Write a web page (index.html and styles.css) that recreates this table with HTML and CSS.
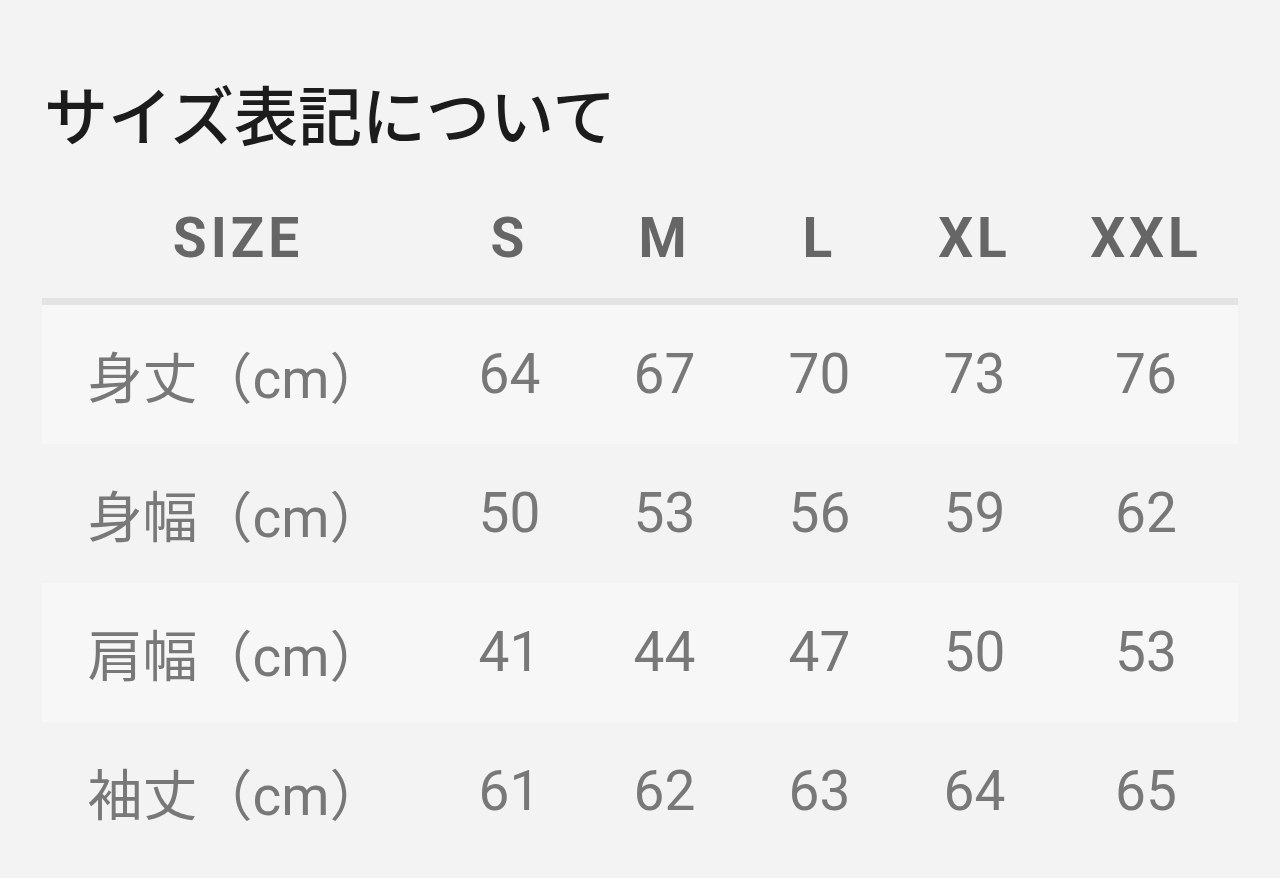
FILE: index.html
```html
<!DOCTYPE html>
<html lang="ja">
<head>
<meta charset="utf-8">
<link rel="stylesheet" href="styles.css">
</head>
<body>
<main class="page">
  <h1 class="title">サイズ表記について</h1>
  <table class="size-table">
    <colgroup>
      <col class="col-label">
      <col class="col-s"><col class="col-m"><col class="col-l"><col class="col-xl"><col class="col-xxl">
    </colgroup>
    <thead>
      <tr><th>SIZE</th><th>S</th><th>M</th><th>L</th><th>XL</th><th>XXL</th></tr>
    </thead>
    <tbody>
      <tr class="alt"><td>身丈（cm）</td><td>64</td><td>67</td><td>70</td><td>73</td><td>76</td></tr>
      <tr><td>身幅（cm）</td><td>50</td><td>53</td><td>56</td><td>59</td><td>62</td></tr>
      <tr class="alt"><td>肩幅（cm）</td><td>41</td><td>44</td><td>47</td><td>50</td><td>53</td></tr>
      <tr><td>袖丈（cm）</td><td>61</td><td>62</td><td>63</td><td>64</td><td>65</td></tr>
    </tbody>
  </table>
</main>
</body>
</html>
```

FILE: styles.css
```css
html, body {
  margin: 0;
  padding: 0;
  background: #f3f3f3;
}
body {
  font-family: Roboto, "Noto Sans CJK JP", sans-serif;
  width: 1280px;
  height: 878px;
  overflow: hidden;
}
.page {
  padding: 73px 42px 0 42px;
}
.title {
  margin: 0 0 0 2px;
  font-family: "Noto Sans CJK JP", sans-serif;
  font-weight: 500;
  font-size: 64px;
  line-height: 78px;
  color: #1c1c1c;
}
.size-table {
  width: 1196px;
  border-collapse: collapse;
  table-layout: fixed;
  margin-top: 37px;
}
.col-label { width: 388px; }
.col-s, .col-m, .col-l, .col-xl { width: 155px; }
.col-xxl { width: 188px; }
.size-table th {
  height: 113px;
  box-sizing: border-box;
  padding: 0 0 9px 4px;
  font-family: Roboto, "Noto Sans CJK JP", sans-serif;
  font-weight: 700;
  font-size: 55px;
  color: #666666;
  text-align: center;
  vertical-align: middle;
  letter-spacing: 4px;
  border-bottom: 7px solid #e3e3e3;
}
.size-table td {
  height: 139px;
  padding: 0 0 0 4px;
  font-size: 55px;
  font-weight: 400;
  color: #787878;
  text-align: center;
  vertical-align: middle;
}
.size-table td:first-child {
  padding-left: 0;
}
.size-table tr.alt td {
  background: #f7f7f7;
}
```
